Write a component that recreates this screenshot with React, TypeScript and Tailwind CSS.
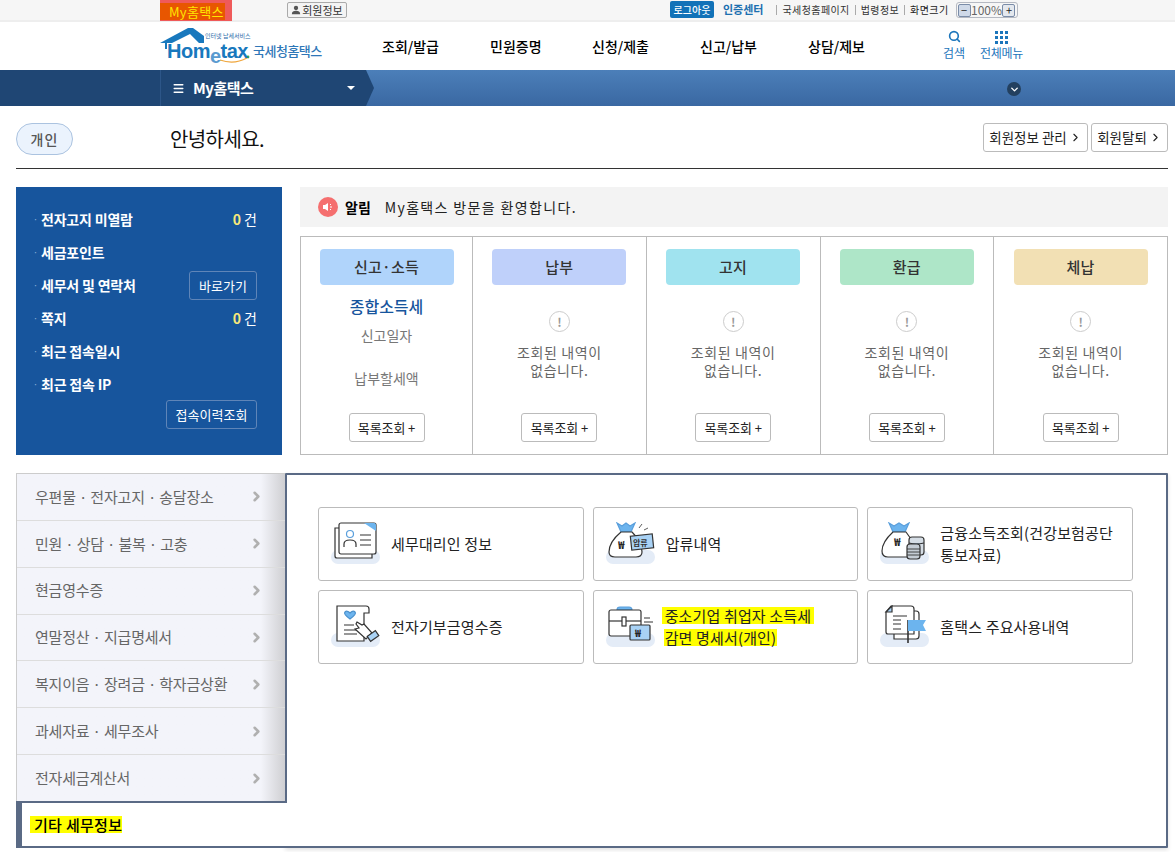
import { ChevronDown, ChevronRight, Menu, Search } from "lucide-react";

const FONT = "font-['Noto_Sans_CJK_KR','Noto_Sans',sans-serif]";

const summaryCols = [
  { title: "납부", color: "bg-[#bfd0fa]" },
  { title: "고지", color: "bg-[#a0e3ef]" },
  { title: "환급", color: "bg-[#aee6c8]" },
  { title: "체납", color: "bg-[#f2e0b4]" },
];

const sideMenus = [
  "우편물 · 전자고지 · 송달장소",
  "민원 · 상담 · 불복 · 고충",
  "현금영수증",
  "연말정산 · 지급명세서",
  "복지이음 · 장려금 · 학자금상환",
  "과세자료 · 세무조사",
  "전자세금계산서",
];

function Sep() {
  return <span className="h-[10px] w-px bg-[#aaa]" />;
}

function TopBar() {
  return (
    <div className="flex h-[22px] border-b-2 border-[#eeeeee] bg-[#f6f6f6] pl-[160px] text-[10px] text-[#444]">
      <div className="flex h-[21px] w-[72px] items-end bg-[#ef5a5a] pb-[1px]">
        <span className="h-[17px] w-[65px] whitespace-nowrap bg-[#e85600] pl-[9px] text-[13px] leading-[17px] tracking-[0.3px] text-[#ffe600]">My홈택스</span>
      </div>
      <div className="ml-[55px] mt-[2px] flex h-[16px] w-[60px] items-center justify-center gap-[1px] rounded-[2px] border border-[#aaa] bg-[#f4f4f4] text-[11px] text-[#333]">
        <svg viewBox="0 0 12 12" className="size-[10px]" fill="#555">
          <circle cx="6" cy="3.6" r="2.6" />
          <path d="M1 11c0-3 2-4 5-4s5 1 5 4z" />
        </svg>
        회원정보
      </div>
      <div className="ml-[323px] mt-[1px] flex h-[17px] w-[44px] items-center justify-center rounded-[2px] bg-[#1272b8] text-[10px] font-medium text-white">
        로그아웃
      </div>
      <span className="ml-[9px] mt-[2px] text-[11px] font-bold leading-[15px] text-[#1b6fb0]">인증센터</span>
      <div className="ml-[13px] mt-[2px] flex h-[15px] items-center gap-[5px] leading-[15px] tracking-[0.4px]">
        <Sep />
        <span className="text-[#333]">국세청홈페이지</span>
        <Sep />
        <span className="text-[#333]">법령정보</span>
        <Sep />
        <span className="text-[#222]">화면크기</span>
      </div>
      <div className="ml-[7px] mt-[2px] flex h-[16px] w-[62px] items-center justify-between rounded-[3px] border border-[#b5b9c2] px-[1px] text-[12px] text-[#666]">
        <span className="flex size-[13px] items-center justify-center rounded-[2px] border border-[#7a8ca8] bg-[#cfd9e8] text-[11px] leading-none text-[#222]">−</span>
        100%
        <span className="flex size-[13px] items-center justify-center rounded-[2px] border border-[#7a8ca8] bg-[#e4e8ee] text-[11px] leading-none text-[#222]">+</span>
      </div>
    </div>
  );
}

function Logo() {
  return (
    <div className="relative h-[48px] w-[180px] shrink-0">
      <svg viewBox="0 0 100 42" className="absolute left-0 top-[5px] h-[42px] w-[100px]">
        <path d="M0 16 L28 1 H33 L44 9 V16 H39 L30 7 L12 16 H7 V22 H5 V16z" fill="#1878bd" />
        <path d="M60 33 Q74 38 87 31" fill="none" stroke="#f0a63c" strokeWidth="1.2" />
        <circle cx="88" cy="30" r="1.4" fill="#38a85a" />
      </svg>
      <span className="absolute left-[45px] top-[10px] text-[6px] leading-[8px] text-[#2c6aa8]">인터넷 납세서비스</span>
      <span className="absolute left-[7px] top-[19px] font-['Liberation_Sans',sans-serif] text-[20px] font-bold leading-[20px] tracking-[-0.5px] text-[#1878bd]">
        Hom
        <span className="relative top-[5px] text-[#5a9bd0]">e</span>
        tax
      </span>
      <span className="absolute left-[93px] top-[20px] text-[13px] font-medium leading-[18px] tracking-[-0.5px] text-[#2f77b8]">국세청홈택스</span>
    </div>
  );
}

function Header() {
  return (
    <div className="flex h-[48px] bg-white pl-[160px]">
      <Logo />
      <nav className="ml-[42px] flex h-[48px] items-center text-[14px] font-medium leading-none text-black">
        <span className="w-[108px]">조회/발급</span>
        <span className="w-[102px]">민원증명</span>
        <span className="w-[108px]">신청/제출</span>
        <span className="w-[108px]">신고/납부</span>
        <span>상담/제보</span>
      </nav>
      <div className="ml-[78px] flex h-[48px] flex-col items-center pt-[8px] text-[12px] leading-[16px] text-[#1b75bb]">
        <Search size={13} strokeWidth={3} />
        <span className="mt-[2px]">검색</span>
      </div>
      <div className="ml-[15px] flex h-[48px] flex-col items-center pt-[9px] text-[12px] leading-[16px] text-[#1b75bb]">
        <span className="grid grid-cols-3 gap-[2px]">
          {Array.from({ length: 9 }).map((_, i) => (
            <span key={i} className="size-[3px] bg-[#1b75bb]" />
          ))}
        </span>
        <span className="mt-[1px] tracking-[-0.3px]">전체메뉴</span>
      </div>
    </div>
  );
}

function NavBar() {
  return (
    <div className="flex h-[36px] bg-gradient-to-b from-[#4c7fb9] to-[#3a68a2]">
      <div className="h-full w-[160px] bg-[#1f4674]" />
      <div className="relative flex h-full w-[206px] items-center border-l border-[#2d5688] bg-[#1f4674] pl-[11px] text-[14px] font-bold text-white">
        <Menu size={13} strokeWidth={2.5} />
        <span className="mb-[2px] ml-[8px] text-[15px] leading-none tracking-[-0.5px]">My홈택스</span>
        <span className="absolute left-[186px] top-[16px] size-0 border-x-[4px] border-t-[4px] border-x-transparent border-t-white" />
        <svg viewBox="0 0 8 36" className="absolute left-[205px] top-0 h-[36px] w-[8px]" fill="#1f4674">
          <path d="M0 0 L8 18 L0 36z" />
        </svg>
      </div>
      <div className="ml-[641px] mt-[12px] flex size-[14px] items-center justify-center rounded-full bg-[#23405f] text-white">
        <ChevronDown size={11} strokeWidth={3} />
      </div>
    </div>
  );
}

function Greeting() {
  return (
    <div className="ml-[16px] mr-[7px] flex h-[63px] items-start border-b border-[#333] pt-[17px]">
      <div className="flex h-[32px] w-[57px] items-center justify-center rounded-full border border-[#abc3e0] bg-[#ebf3fd] text-[14px] font-medium tracking-[1px] text-[#555]">
        개인
      </div>
      <span className="ml-[97px] text-[20px] leading-[32px] tracking-[-0.6px] text-[#111]">안녕하세요.</span>
      <div className="ml-auto flex gap-[3px]">
        <button className="flex h-[29px] w-[105px] items-center justify-center gap-[2px] rounded-[3px] border border-[#bbb] text-[13.5px] text-[#222]">
          회원정보 관리 <ChevronRight size={13} />
        </button>
        <button className="flex h-[29px] w-[77px] items-center justify-center gap-[2px] rounded-[3px] border border-[#bbb] text-[13.5px] text-[#222]">
          회원탈퇴 <ChevronRight size={13} />
        </button>
      </div>
    </div>
  );
}

function InfoRow({ label, right }: { label: string; right?: React.ReactNode }) {
  return (
    <div className="flex h-[33px] items-center">
      <span className="w-[8px] text-[9px] leading-none text-[#8fb0d8]">·</span>
      <span className="text-[14px] font-bold tracking-[-0.2px] text-white">{label}</span>
      <div className="ml-auto flex items-center">{right}</div>
    </div>
  );
}

function Count() {
  return (
    <span className="text-[14px] text-white">
      <b className="text-[#f7e87a]">0</b> 건
    </span>
  );
}

function OutlineBtn({ children, className }: { children: string; className: string }) {
  return (
    <button className={`flex h-[29px] items-center justify-center rounded-[3px] border border-[#5f85b8] text-[13px] text-white ${className}`}>
      {children}
    </button>
  );
}

function InfoPanel() {
  return (
    <div className="h-[268px] w-[266px] shrink-0 bg-[#17559d] pl-[17px] pr-[25px] pt-[16px]">
      <InfoRow label="전자고지 미열람" right={<Count />} />
      <InfoRow label="세금포인트" />
      <InfoRow label="세무서 및 연락처" right={<OutlineBtn className="w-[68px]">바로가기</OutlineBtn>} />
      <InfoRow label="쪽지" right={<Count />} />
      <InfoRow label="최근 접속일시" />
      <InfoRow label="최근 접속 IP" />
      <div className="-mt-[1px] flex justify-end">
        <OutlineBtn className="w-[91px]">접속이력조회</OutlineBtn>
      </div>
    </div>
  );
}

function MoreBtn() {
  return (
    <button className="mb-[12px] mt-auto flex h-[29px] w-[76px] items-center justify-center rounded-[3px] border border-[#bbb] text-[13px] tracking-[-0.1px] text-[#222]">
      목록조회 +
    </button>
  );
}

function Summary() {
  return (
    <div className="min-w-0 flex-1">
      <div className="flex h-[40px] items-center bg-[#f3f3f3] pl-[18px] text-[14px] text-[#222]">
        <span className="flex size-[20px] items-center justify-center rounded-full bg-[#f56f6f]">
          <svg viewBox="0 0 12 12" className="size-[12px]" fill="white">
            <path d="M1 4h2l3-2v8L3 8H1z" />
            <path d="M8 3h1v1H8zM8 5.5h2v1H8zM8 8h1v1H8z" />
          </svg>
        </span>
        <b className="ml-[7px] text-black">알림</b>
        <span className="ml-[14px] tracking-[1.35px]">My홈택스 방문을 환영합니다.</span>
      </div>
      <div className="mt-[9px] flex h-[219px] border border-[#bbb] text-center">
        <div className="flex w-[172px] shrink-0 flex-col items-center border-r border-[#bbb] pt-[12px]">
          <div className="flex h-[36px] w-[134px] items-center justify-center rounded-[4px] bg-[#b0d4fb] text-[15px] font-medium tracking-[0.2px] text-[#333]">
            신고·소득
          </div>
          <span className="mt-[9px] text-[16px] font-medium leading-[24px] text-[#17559d]">종합소득세</span>
          <span className="mt-[7px] text-[14px] leading-[20px] text-[#777]">신고일자</span>
          <span className="mt-[23px] text-[14px] leading-[20px] text-[#777]">납부할세액</span>
          <MoreBtn />
        </div>
        {summaryCols.map((col, i) => (
          <div key={col.title} className={`flex flex-1 flex-col items-center pt-[12px] ${i < 3 ? "border-r border-[#bbb]" : ""}`}>
            <div className={`flex h-[36px] w-[134px] items-center justify-center rounded-[4px] text-[15px] font-medium tracking-[0.2px] text-[#333] ${col.color}`}>
              {col.title}
            </div>
            <span className="mt-[26px] flex size-[21px] items-center justify-center rounded-full border border-[#ccc] text-[12px] font-bold leading-none text-[#999]">
              !
            </span>
            <p className="mt-[11px] text-[14px] leading-[18px] tracking-[0.6px] text-[#666]">
              조회된 내역이
              <br />
              없습니다.
            </p>
            <MoreBtn />
          </div>
        ))}
      </div>
    </div>
  );
}

function IconBase({ children }: { children: React.ReactNode }) {
  return (
    <svg viewBox="0 0 50 44" className="h-[44px] w-[50px] shrink-0" fill="none" stroke="#333" strokeWidth="1.2">
      <rect x="0" y="28" width="49" height="14" rx="7" fill="#e4ecf7" stroke="none" />
      {children}
    </svg>
  );
}

function AgentIcon() {
  return (
    <IconBase>
      <path d="M4 6v28q0 2 2 2h35V6z" fill="#fff" />
      <rect x="8" y="1" width="37" height="31" rx="2" fill="#fff" />
      <path d="M33 1h10q2 0 2 2v6z" fill="#6cb4ee" stroke="none" />
      <circle cx="19" cy="12" r="3.5" stroke="#5a9fdc" />
      <path d="M13 25v-3q0-4 6-4t6 4v3M29 13h11M29 18h11M29 23h11" />
    </IconBase>
  );
}

function SeizureIcon() {
  return (
    <IconBase>
      <path d="M11 1l5 3 4-3 4 3 5-3-4 9H15z" fill="#6cb4ee" stroke="#5a9fdc" />
      <path d="M15 10Q3 20 3 30q0 5 6 5h21q6 0 6-5Q36 20 26 10z" fill="#fff" />
      <text x="12" y="27" fontSize="11" fontWeight="700" fill="#222" stroke="none">₩</text>
      <rect x="25" y="13" width="22" height="14" transform="rotate(-6 36 20)" fill="#a9d2f5" />
      <text x="27" y="24" fontSize="8" fontWeight="700" fill="#333" stroke="none">압류</text>
      <path d="M33 6l3-4M38 8l4-2" strokeWidth="0.8" />
    </IconBase>
  );
}

function IncomeIcon() {
  return (
    <IconBase>
      <path d="M9 1l5 3 5-3 5 3 5-3-4 9H13z" fill="#6cb4ee" stroke="#5a9fdc" />
      <path d="M13 10Q2 20 2 29q0 6 6 6h22q5 0 5-5Q34 20 26 10z" fill="#fff" />
      <text x="14" y="24" fontSize="11" fontWeight="700" fill="#222" stroke="none">₩</text>
      <rect x="29" y="15" width="15" height="18" rx="3" fill="#d5dde5" />
      <path d="M29 21q7 2 15 0" fill="#a9d2f5" />
      <rect x="27" y="22" width="13" height="15" rx="3" fill="#c4ccd4" />
      <path d="M27 27h13M27 30h13M27 33h13" strokeWidth="0.9" />
    </IconBase>
  );
}

function DonationIcon() {
  return (
    <IconBase>
      <path d="M6 1h29q3 0 3 3v4h-5v28H6z" fill="#fff" />
      <path d="M19 8q-3-3-5-1t5 7q7-5 5-7t-5 1z" fill="#6cb4ee" stroke="#4a90cc" />
      <path d="M13 20h10M13 25h13M13 29h13" />
      <path d="M26 17l5 3 2-1 8 9-6 6-11-10 4-1-3-4z" fill="#fff" />
      <rect x="37" y="28" width="10" height="6" transform="rotate(-35 42 31)" fill="#a9d2f5" />
    </IconBase>
  );
}

function BusinessIcon() {
  return (
    <IconBase>
      <path d="M11 5q0-3 3-3h9q3 0 3 3z" fill="#6cb4ee" stroke="#5a9fdc" />
      <rect x="3" y="5" width="32" height="26" rx="2" fill="#fff" />
      <path d="M3 16h32" />
      <rect x="16" y="12" width="4" height="9" fill="#fff" />
      <path d="M38 13h6M38 17h9" />
      <rect x="24" y="20" width="20" height="15" rx="1" fill="#a9d2f5" />
      <text x="29" y="32" fontSize="10" fontWeight="700" fill="#222" stroke="none">₩</text>
    </IconBase>
  );
}

function UsageIcon() {
  return (
    <IconBase>
      <path d="M14 6h22q3 0 3 3v22q0 3-3 3H14z" fill="#fff" />
      <path d="M11 1h20q3 0 3 3v25H8q-2 0-2-2V7z" fill="#fff" />
      <path d="M12 1v6H6z" fill="#a9d2f5" />
      <path d="M13 11h14M13 15h8M13 19h8M13 24h8" />
      <path d="M28 38V15" strokeWidth="1.6" />
      <path d="M28 15h18l-3 5 3 6H28z" fill="#6cb4ee" stroke="none" />
    </IconBase>
  );
}

function LinkCard({ icon, children, iconGap = "ml-[10px]" }: { icon: React.ReactNode; children: React.ReactNode; iconGap?: string }) {
  return (
    <div className="flex h-[74px] items-center rounded-[3px] border border-[#bbb] pl-[12px]">
      {icon}
      <div className={`${iconGap} text-[15px] leading-[22px] tracking-[0.15px] text-[#222]`}>{children}</div>
    </div>
  );
}

function LowerSection() {
  return (
    <div className="relative ml-[16px] mr-[7px] mt-[18px] h-[375px]">
      <div className="relative z-10 w-[269px] border border-r-0 border-[#ccc] bg-[#f3f4fa]">
        {sideMenus.map((m, i) => (
          <div
            key={m}
            className={`flex h-[46.85px] items-center justify-between bg-gradient-to-r from-[#f3f4fa] from-[91%] to-[#cfcfd2] pl-[18px] pr-[21px] text-[15px] tracking-[-0.2px] text-[#666] ${i < 6 ? "border-b border-[#ddd]" : ""}`}
          >
            {m}
            <ChevronRight size={15} strokeWidth={4} className="text-[#b0b0b0]" />
          </div>
        ))}
      </div>
      {/* 콘텐츠 패널: 아래 탭이 왼쪽 테두리를 덮는다 */}
      <div className="absolute left-[269px] top-0 h-[375px] w-[883px] rounded-[1px] border-2 border-[#5a6a85] bg-white shadow-[0_2px_4px_rgba(0,0,0,0.12)]">
        <div className="grid grid-cols-3 gap-x-[9px] gap-y-[9px] pl-[31px] pr-[33px] pt-[32px]">
          <LinkCard icon={<AgentIcon />}>세무대리인 정보</LinkCard>
          <LinkCard icon={<SeizureIcon />}>압류내역</LinkCard>
          <LinkCard icon={<IncomeIcon />}>
            금융소득조회(건강보험공단
            <br />
            통보자료)
          </LinkCard>
          <LinkCard icon={<DonationIcon />}>전자기부금영수증</LinkCard>
          <LinkCard icon={<BusinessIcon />} iconGap="ml-[6px]">
            <div className="-mt-[2px] flex flex-col items-start gap-[5px]">
              <span className="h-[17px] bg-[#ffff00] px-[3px] leading-[17px]">중소기업 취업자 소득세</span>
              <span className="ml-[2px] h-[17px] bg-[#ffff00] px-[1px] leading-[17px]">감면 명세서(개인)</span>
            </div>
          </LinkCard>
          <LinkCard icon={<UsageIcon />}>홈택스 주요사용내역</LinkCard>
        </div>
      </div>
      <div className="absolute bottom-0 left-0 z-20 flex h-[47px] w-[271px] items-center border-y-2 border-l-[6px] border-r-0 border-[#5a6a85] bg-white pl-[8px] text-[15px] font-medium text-black">
        <span className="h-[17px] bg-[#ffff00] pl-[4px] leading-[17px] tracking-[0.3px]">기타 세무정보</span>
      </div>
    </div>
  );
}

export default function App() {
  return (
    <div className={`h-[852px] w-[1175px] overflow-hidden bg-white ${FONT}`}>
      <TopBar />
      <Header />
      <NavBar />
      <Greeting />
      <div className="ml-[16px] mr-[7px] mt-[18px] flex gap-[18px]">
        <InfoPanel />
        <Summary />
      </div>
      <LowerSection />
    </div>
  );
}
